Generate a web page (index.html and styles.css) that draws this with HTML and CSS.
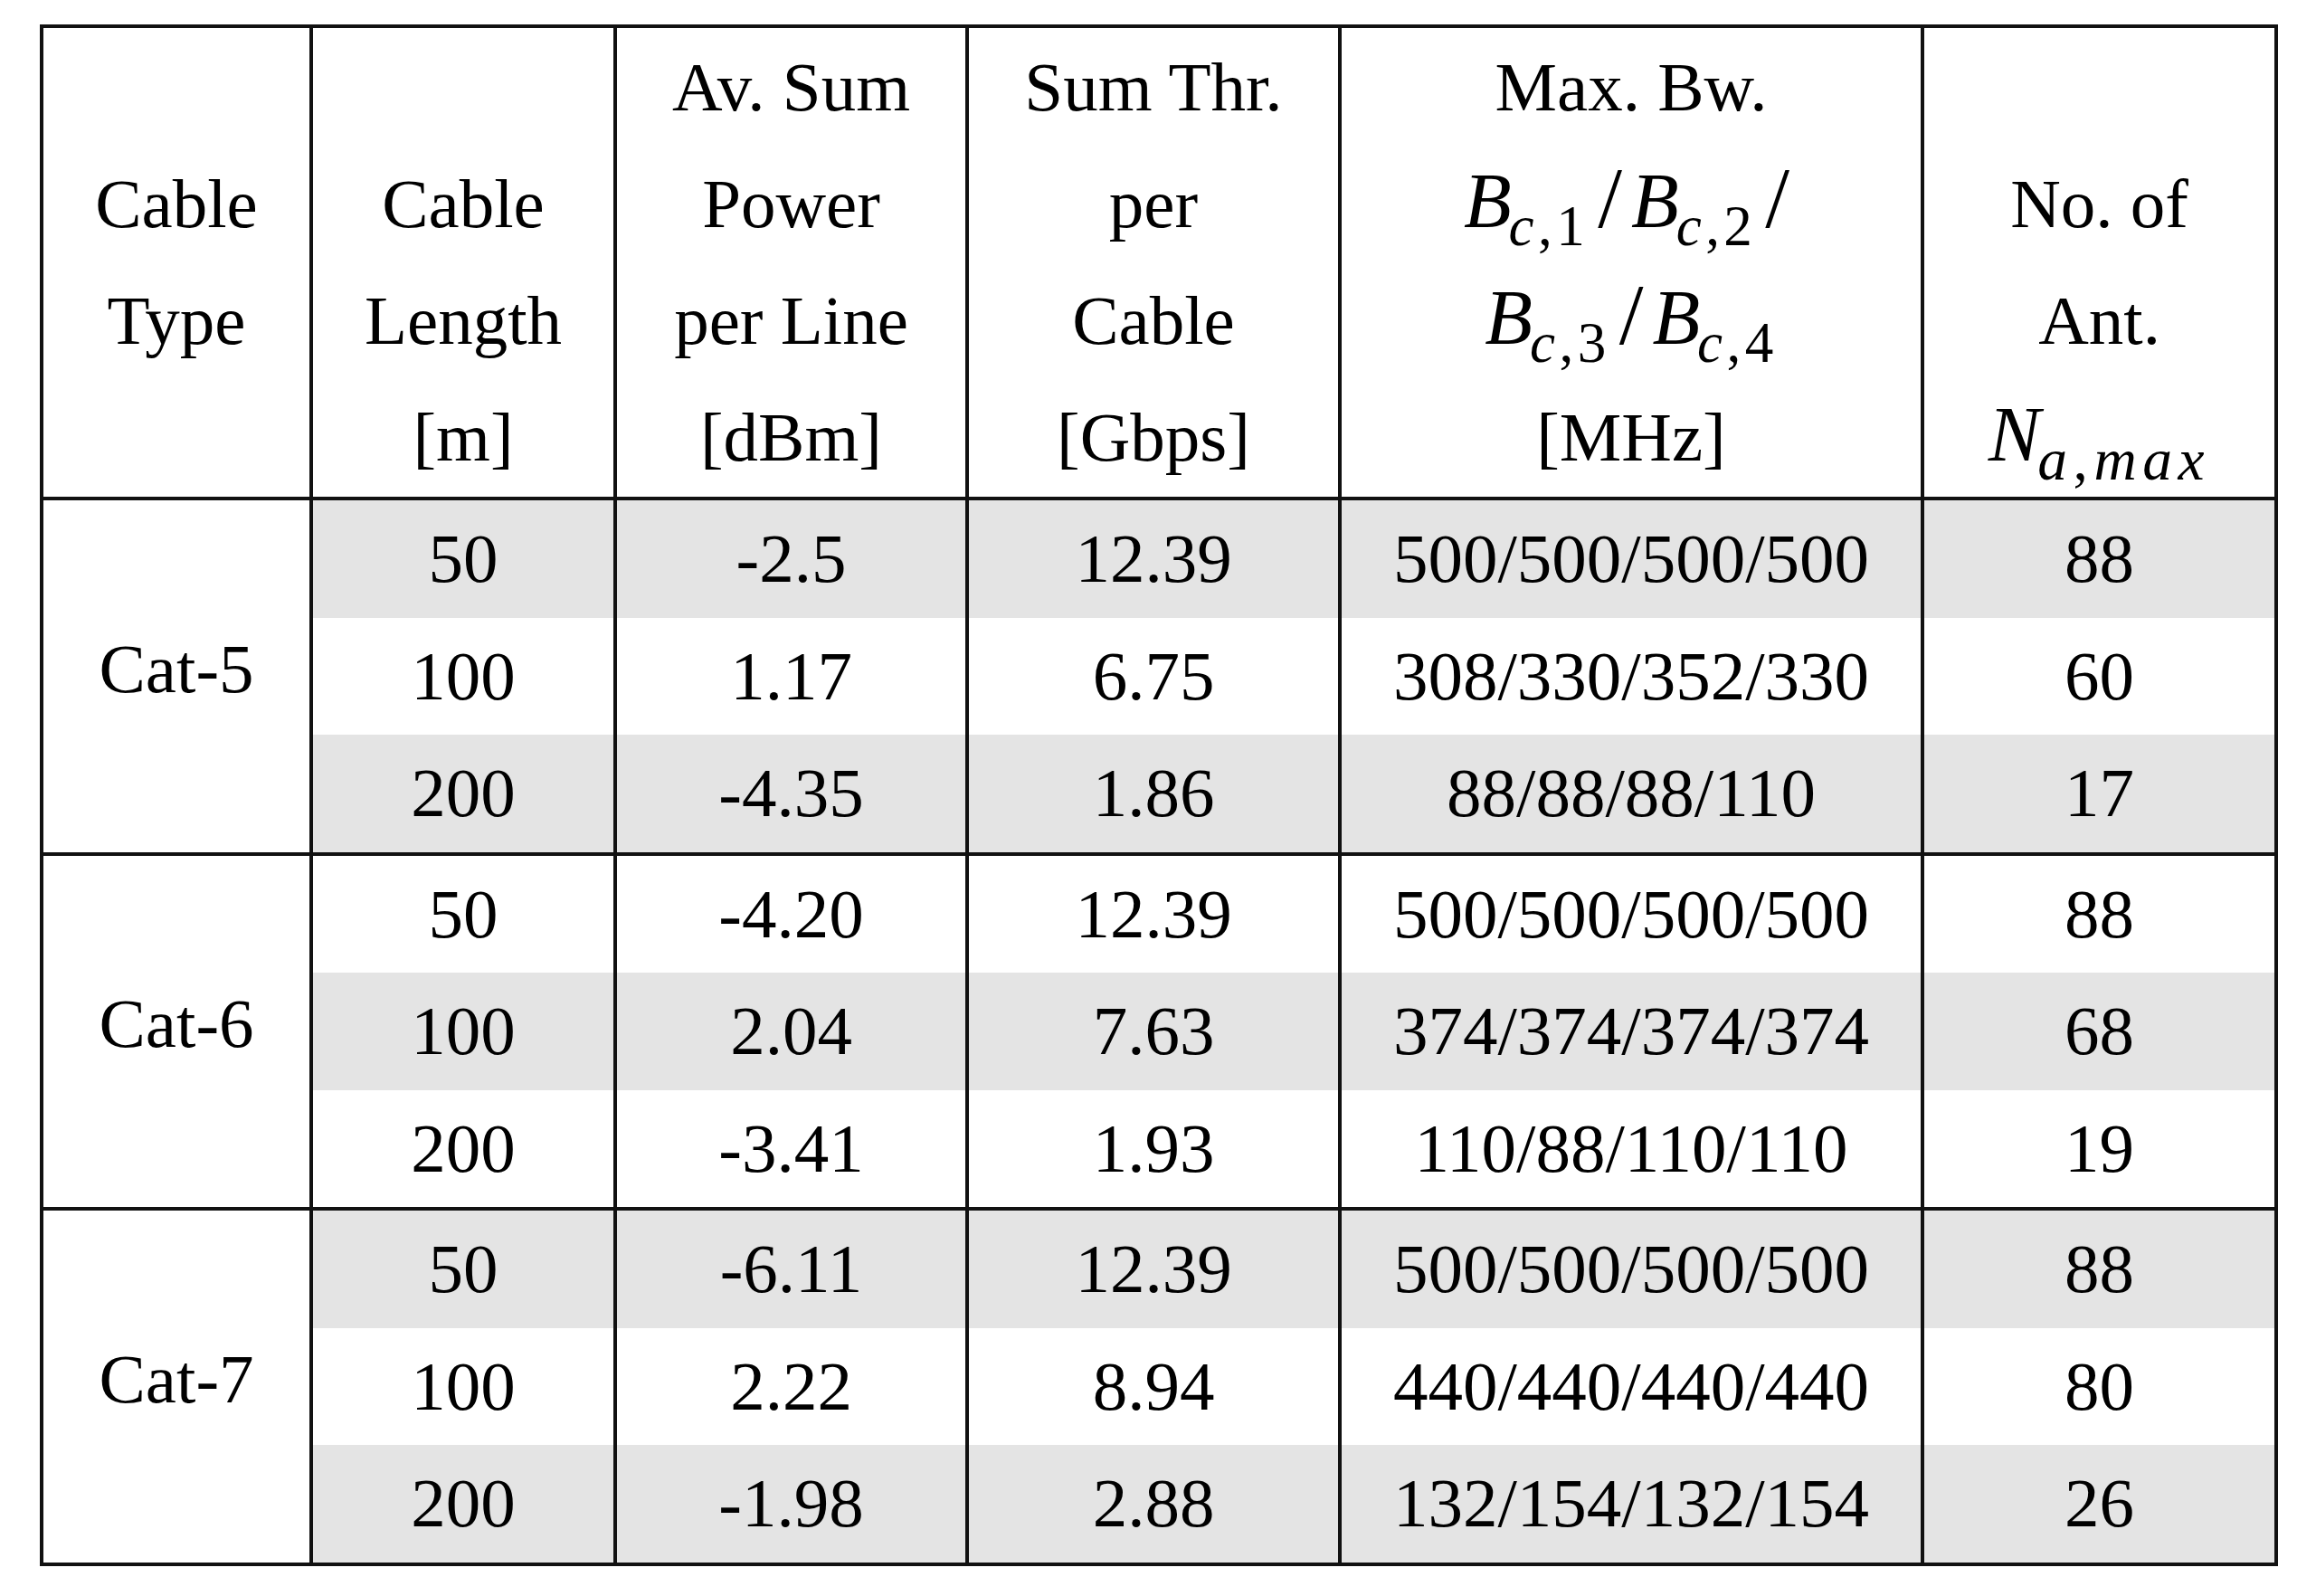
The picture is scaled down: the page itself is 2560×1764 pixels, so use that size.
FILE: index.html
```html
<!DOCTYPE html>
<html lang="en">
<head>
    <meta charset="UTF-8">
    <meta name="viewport" content="width=device-width, initial-scale=1.0">
    <title>Cable Results</title>
    <link rel="stylesheet" href="styles.css">
</head>
<body>

    <table class="results">
        <colgroup>
            <col class="c-type">
            <col class="c-len">
            <col class="c-pow">
            <col class="c-thr">
            <col class="c-bw">
            <col class="c-ant">
        </colgroup>

        <!-- Header -->
        <thead>
            <tr>
                <th class="lift">Cable<br>Type</th>
                <th>Cable<br>Length<br>[m]</th>
                <th>Av. Sum<br>Power<br>per Line<br>[dBm]</th>
                <th>Sum Thr.<br>per<br>Cable<br>[Gbps]</th>
                <th>Max. Bw.<br>
                    <span class="math"><i>B</i><sub><i>c</i>,1</sub><span class="sl">/</span><i>B</i><sub><i>c</i>,2</sub><span class="sl">/</span></span><br>
                    <span class="math"><i>B</i><sub><i>c</i>,3</sub><span class="sl">/</span><i>B</i><sub><i>c</i>,4</sub></span><br>
                    [MHz]
                </th>
                <th>No. of<br>Ant.<br><span class="math"><i>N</i><sub class="wide"><i>a</i>,<i>max</i></sub></span></th>
            </tr>
        </thead>

        <!-- Cat-5 -->
        <tbody>
            <tr class="shade">
                <td class="cat" rowspan="3">Cat-5</td>
                <td>50</td><td>-2.5</td><td>12.39</td><td>500/500/500/500</td><td>88</td>
            </tr>
            <tr>
                <td>100</td><td>1.17</td><td>6.75</td><td>308/330/352/330</td><td>60</td>
            </tr>
            <tr class="shade">
                <td>200</td><td>-4.35</td><td>1.86</td><td>88/88/88/110</td><td>17</td>
            </tr>
        </tbody>

        <!-- Cat-6 -->
        <tbody>
            <tr>
                <td class="cat" rowspan="3">Cat-6</td>
                <td>50</td><td>-4.20</td><td>12.39</td><td>500/500/500/500</td><td>88</td>
            </tr>
            <tr class="shade">
                <td>100</td><td>2.04</td><td>7.63</td><td>374/374/374/374</td><td>68</td>
            </tr>
            <tr>
                <td>200</td><td>-3.41</td><td>1.93</td><td>110/88/110/110</td><td>19</td>
            </tr>
        </tbody>

        <!-- Cat-7 -->
        <tbody>
            <tr class="shade">
                <td class="cat" rowspan="3">Cat-7</td>
                <td>50</td><td>-6.11</td><td>12.39</td><td>500/500/500/500</td><td>88</td>
            </tr>
            <tr>
                <td>100</td><td>2.22</td><td>8.94</td><td>440/440/440/440</td><td>80</td>
            </tr>
            <tr class="shade">
                <td>200</td><td>-1.98</td><td>2.88</td><td>132/154/132/154</td><td>26</td>
            </tr>
        </tbody>
    </table>

</body>
</html>
```

FILE: styles.css
```css
/* General Styles */
body {
    margin: 0;
    padding: 27px 0 0 44px;
    background: #fff;
    color: #000;
    font-family: 'Liberation Serif', 'Times New Roman', serif;
}

/* Table */
.results {
    border-collapse: collapse;
    table-layout: fixed;
    width: 2474px;
    border: 4px solid #111;
    font-size: 77px;
}

.c-type { width: 298px; }
.c-len  { width: 336px; }
.c-pow  { width: 389px; }
.c-thr  { width: 412px; }
.c-bw   { width: 644px; }
.c-ant  { width: 391px; }

th, td {
    border-left: 4px solid #111;
    border-right: 4px solid #111;
    padding: 0;
    text-align: center;
    white-space: nowrap;
}

/* Header */
thead tr {
    height: 522px;
}

th {
    font-weight: normal;
    line-height: 129px;
    vertical-align: bottom;
    padding-bottom: 1px;
}

th.lift {
    padding-bottom: 130px;
}

/* Body */
tbody {
    border-top: 4px solid #111;
}

td {
    height: 129.5px;
    line-height: 129.5px;
    vertical-align: middle;
}

.shade td {
    background: #e4e4e4;
}

.shade td.cat,
td.cat {
    background: #fff;
    padding-bottom: 16px;
}

/* Math bits */
.math i {
    font-style: italic;
    font-size: 1.12em;
    line-height: 0;
}

.math sub {
    font-size: 0.82em;
    line-height: 0;
    vertical-align: -0.32em;
    letter-spacing: 0.07em;
    margin-left: -3px;
}

.math sub i {
    font-size: 1em;
}

.math sub.wide {
    font-size: 0.85em;
    letter-spacing: 0.1em;
}

.math .sl {
    font-size: 1.25em;
    line-height: 0;
    margin: 0 10px;
}
```
